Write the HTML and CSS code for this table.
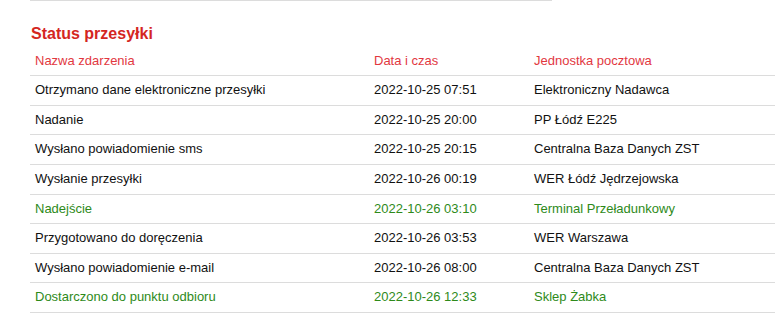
FILE: index.html
```html
<!DOCTYPE html>
<html lang="pl">
<head>
<meta charset="utf-8">
<title>Status przesyłki</title>
<link rel="stylesheet" href="styles.css">
</head>
<body>
<div class="page">
  <div class="top-rule"></div>
  <h2 class="title">Status przesyłki</h2>
  <table class="events">
    <colgroup>
      <col class="c-name">
      <col class="c-date">
      <col class="c-unit">
    </colgroup>
    <thead>
      <tr><th>Nazwa zdarzenia</th><th>Data i czas</th><th>Jednostka pocztowa</th></tr>
    </thead>
    <tbody>
      <tr><td>Otrzymano dane elektroniczne przesyłki</td><td>2022-10-25 07:51</td><td>Elektroniczny Nadawca</td></tr>
      <tr><td>Nadanie</td><td>2022-10-25 20:00</td><td>PP Łódź E225</td></tr>
      <tr><td>Wysłano powiadomienie sms</td><td>2022-10-25 20:15</td><td>Centralna Baza Danych ZST</td></tr>
      <tr><td>Wysłanie przesyłki</td><td>2022-10-26 00:19</td><td>WER Łódź Jędrzejowska</td></tr>
      <tr class="hl"><td>Nadejście</td><td>2022-10-26 03:10</td><td>Terminal Przeładunkowy</td></tr>
      <tr><td>Przygotowano do doręczenia</td><td>2022-10-26 03:53</td><td>WER Warszawa</td></tr>
      <tr><td>Wysłano powiadomienie e-mail</td><td>2022-10-26 08:00</td><td>Centralna Baza Danych ZST</td></tr>
      <tr class="hl"><td>Dostarczono do punktu odbioru</td><td>2022-10-26 12:33</td><td>Sklep Żabka</td></tr>
    </tbody>
  </table>
</div>
</body>
</html>
```
FILE: styles.css
```css
html, body {
  margin: 0;
  padding: 0;
  background: #fff;
}
body {
  font-family: "Liberation Sans", Arial, sans-serif;
  font-size: 13px;
  color: #111;
}
.page {
  padding-left: 30px;
}
.top-rule {
  width: 522px;
  height: 1px;
  background: #dcdcdc;
}
.title {
  margin: 24px 0 0 1px;
  font-size: 16px;
  font-weight: bold;
  color: #d4261f;
  line-height: 18px;
}
.events {
  border-collapse: collapse;
  table-layout: fixed;
  width: 760px;
  margin-top: 6px;
}
.c-name { width: 339px; }
.c-date { width: 160px; }
.events th {
  text-align: left;
  font-weight: normal;
  color: #e2383f;
  padding: 4px 5px 7px;
  line-height: 15px;
  border-bottom: 1px solid #dcdcdc;
}
.events td {
  padding: 6px 5px 7.625px;
  line-height: 15px;
  border-bottom: 1px solid #dcdcdc;
}
.events tr.hl td {
  color: #2e8a1a;
}
```
